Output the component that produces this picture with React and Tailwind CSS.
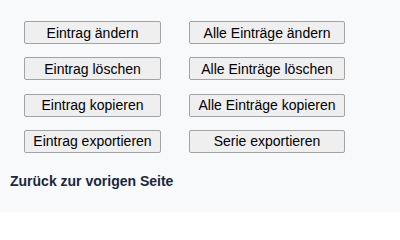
import { Fragment } from "react";

const leftActions = ["Eintrag ändern", "Eintrag löschen", "Eintrag kopieren", "Eintrag exportieren"];
const rightActions = ["Alle Einträge ändern", "Alle Einträge löschen", "Alle Einträge kopieren", "Serie exportieren"];

const ActionButton = ({ label }) => {
    return (
        <button className="h-[23px] w-full bg-[#efefef] border border-[#a3a3a3] rounded-[2px] text-[14px] leading-none text-black">
            {label}
        </button>
    );
};

const App = () => {
    return (
        <div className="w-[400px] h-[212px] bg-[#f8f9fb] px-[10px] pt-[21px] font-['Liberation_Sans',Arial,sans-serif]">
            <div className="ml-[14px] grid grid-cols-[137px_156px] gap-x-[28px] gap-y-[13.33px]">
                {leftActions.map((label, i) => (
                    <Fragment key={label}>
                        <ActionButton label={label} />
                        <ActionButton label={rightActions[i]} />
                    </Fragment>
                ))}
            </div>
            <p className="mt-[20px] text-[14px] leading-[16px] font-bold text-[#1a2740]">Zurück zur vorigen Seite</p>
        </div>
    );
};

export default App;
